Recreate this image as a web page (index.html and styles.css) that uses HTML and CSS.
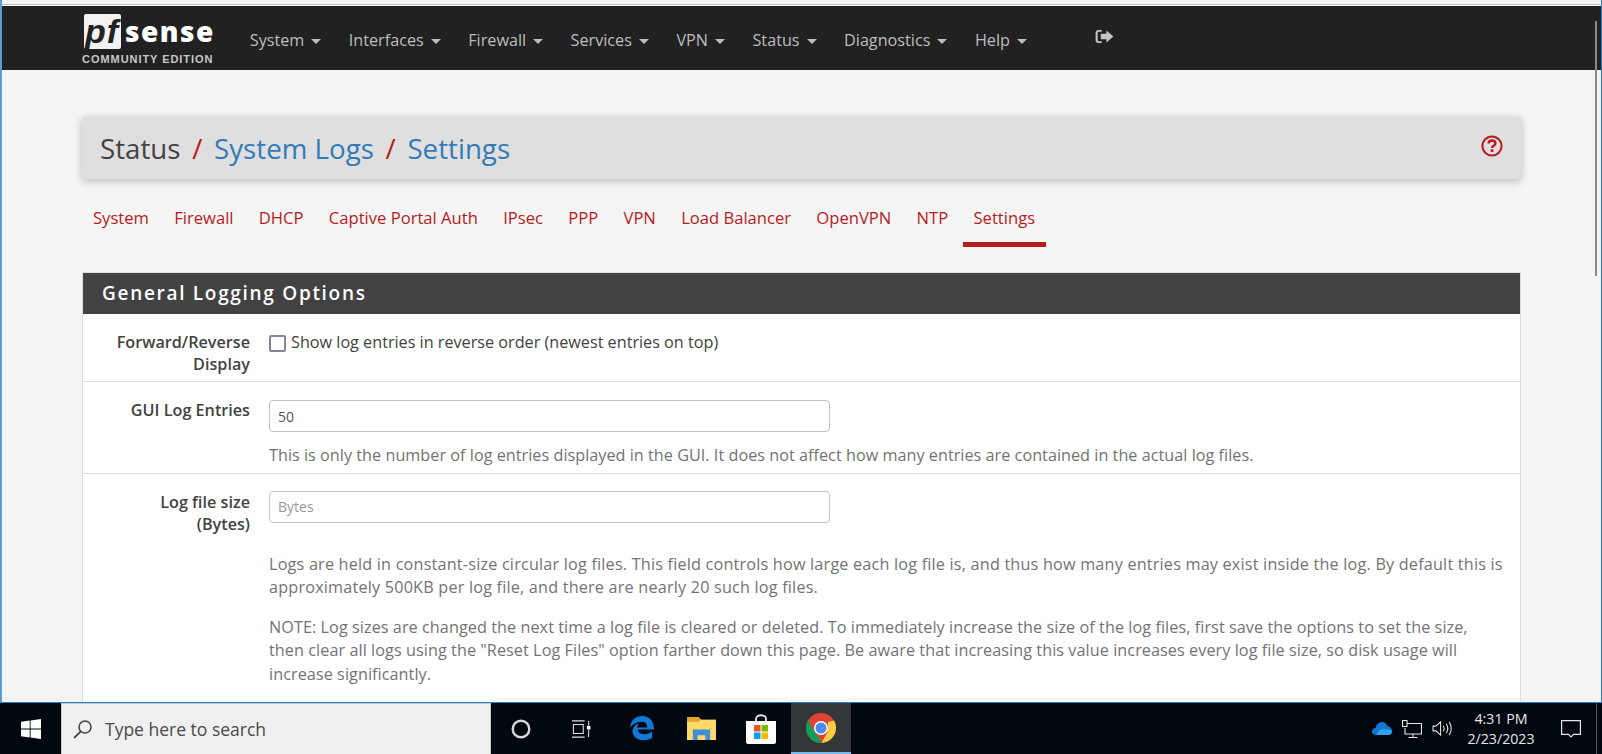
FILE: index.html
```html
<!DOCTYPE html>
<html lang="en">
<head>
  <meta charset="UTF-8">
  <title>Status: System Logs: Settings</title>
  <link rel="stylesheet" href="styles.css">
</head>
<body>
  <div class="browser">
    <div class="titlestrip"></div>
    <nav class="navbar">
      <a class="brand">
        <span class="brand-top">
          <span class="brand-pf">pf</span><span class="brand-sense">sense</span>
        </span>
        <span class="brand-sub">COMMUNITY EDITION</span>
      </a>
      <ul class="menu">
        <li>System<b class="caret"></b></li>
        <li>Interfaces<b class="caret"></b></li>
        <li>Firewall<b class="caret"></b></li>
        <li>Services<b class="caret"></b></li>
        <li>VPN<b class="caret"></b></li>
        <li>Status<b class="caret"></b></li>
        <li>Diagnostics<b class="caret"></b></li>
        <li>Help<b class="caret"></b></li>
      </ul>
      <svg class="logout" viewBox="0 0 20 16" width="19" height="15">
        <path fill="#c4c4c4" d="M7 1H3.500C1.700 1 .5 2.200 .5 4v8c0 1.800 1.200 3 3 3H7v-2H4c-.8 0-1.300-.5-1.300-1.200V4.200C2.700 3.500 3.200 3 4 3h3z"/>
        <path fill="#c4c4c4" d="M12 1.500 19.500 8 12 14.500V11H6V5h6z"/>
      </svg>
    </nav>

    <div class="container">
      <header class="crumbs">
        <h1>Status <span class="sep">/</span> <a>System Logs</a> <span class="sep">/</span> <a>Settings</a></h1>
        <svg class="help" viewBox="0 0 22 22" width="22" height="22">
          <circle cx="11" cy="11" r="9.600" fill="none" stroke="#b71c1c" stroke-width="2"/>
          <path fill="none" stroke="#b71c1c" stroke-width="2.400" d="M7.600 8.600c0-2 1.500-3.100 3.400-3.100s3.400 1 3.400 2.900c0 2.500-3.400 2.300-3.400 4.600"/>
          <rect x="9.700" y="14.300" width="2.700" height="2.600" fill="#b71c1c"/>
        </svg>
      </header>

      <ul class="tabs">
        <li>System</li>
        <li>Firewall</li>
        <li>DHCP</li>
        <li>Captive Portal Auth</li>
        <li>IPsec</li>
        <li>PPP</li>
        <li>VPN</li>
        <li>Load Balancer</li>
        <li>OpenVPN</li>
        <li>NTP</li>
        <li class="active">Settings</li>
      </ul>

      <section class="panel">
        <h2>General Logging Options</h2>
        <div class="row">
          <label class="row-label">Forward/Reverse Display</label>
          <div class="row-body">
            <label class="check"><span class="box"></span>Show log entries in reverse order (newest entries on top)</label>
          </div>
        </div>
        <div class="row">
          <label class="row-label">GUI Log Entries</label>
          <div class="row-body">
            <input class="field" type="text" value="50">
            <p class="help-text">This is only the number of log entries displayed in the GUI. It does not affect how many entries are contained in the actual log files.</p>
          </div>
        </div>
        <div class="row row-long">
          <label class="row-label">Log file size (Bytes)</label>
          <div class="row-body">
            <input class="field" type="text" placeholder="Bytes">
            <p class="help-text help-intro">Logs are held in constant-size circular log files. This field controls how large each log file is, and thus how many entries may exist inside the log. By default this is approximately 500KB per log file, and there are nearly 20 such log files.</p>
            <p class="help-text help-note">NOTE: Log sizes are changed the next time a log file is cleared or deleted. To immediately increase the size of the log files, first save the options to set the size, then clear all logs using the "Reset Log Files" option farther down this page. Be aware that increasing this value increases every log file size, so disk usage will increase significantly.</p>
          </div>
        </div>
      </section>
    </div>
    <div class="scrollthumb"></div>
  </div>

  <footer class="taskbar">
    <div class="start">
      <svg viewBox="0 0 20 20" width="20" height="20"><path fill="#fff" d="M0 2.800 8.700 1.600V9.500H0zM9.600 1.500 20 0V9.500H9.600zM0 10.500H8.700V18.400L0 17.200zM9.600 10.500H20V20L9.600 18.500z"/></svg>
    </div>
    <div class="search">
      <svg viewBox="0 0 20 20" width="20" height="20"><circle cx="12" cy="8" r="6" fill="none" stroke="#444" stroke-width="1.500"/><path stroke="#444" stroke-width="1.800" d="M7.800 12.300 1 19"/></svg>
      <span>Type here to search</span>
    </div>
    <div class="task-icons">
      <div class="task"><svg viewBox="0 0 20 20" width="20" height="20"><circle cx="10" cy="10" r="8.300" fill="none" stroke="#d8d8d8" stroke-width="2.400"/></svg></div>
      <div class="task"><svg viewBox="0 0 22 20" width="20" height="18"><g fill="none" stroke="#e0e0e0" stroke-width="1.200"><path d="M1 1h14M1 19h14M2.500 5h11v10h-11zM19.500 1v5M19.500 11v8"/></g><rect x="17.500" y="6.500" width="4" height="4" fill="#fff"/></svg></div>
      <div class="task"><svg viewBox="0 0 26 28" width="25" height="27"><path fill="#0f7ad8" d="M1 13C2 5 7 1 14 1c7 0 12 5 12 14H9c.5 5 9 7 15 2v7c-7 4-18 3-20-5-.6-2.500 0-5 1.500-7 1-1.400 3-3 5-3.500-1 1-2 2.500-2.200 4.500H19c0-4-2-6-5.500-6C8.500 7 4 9 1 13z"/></svg></div>
      <div class="task"><svg viewBox="0 0 30 26" width="29" height="25"><path fill="#e0a526" d="M0 1h12l3 3h15v21H0z"/><path fill="#ffd968" d="M0 6h12l2-2h16v21H0z"/><path fill="#3d8fd6" d="M6 14h18v11h-5v-5h-8v5H6z"/></svg></div>
      <div class="task"><svg viewBox="0 0 30 30" width="30" height="30"><path fill="none" stroke="#e8e8e8" stroke-width="1.800" d="M10 8V5c0-5 10-5 10 0v3"/><path fill="#fff" d="M0 7h30v21c0 1-1 2-2 2H2c-1 0-2-1-2-2z"/><rect x="8" y="11" width="6.500" height="6.500" fill="#f25022"/><rect x="15.500" y="11" width="6.500" height="6.500" fill="#7fba00"/><rect x="8" y="18.500" width="6.500" height="6.500" fill="#00a4ef"/><rect x="15.500" y="18.500" width="6.500" height="6.500" fill="#ffb900"/></svg></div>
      <div class="task task-active"><svg viewBox="0 0 30 30" width="30" height="30"><circle cx="15" cy="15" r="15" fill="#db4437"/><path fill="#0f9d58" d="M15 30A15 15 0 0 1 2 7.500L9 19.500 16 30z"/><path fill="#ffcd40" d="M28 7.500A15 15 0 0 1 15.500 30L21.500 19 22 9z"/><circle cx="15" cy="15" r="7" fill="#fff"/><circle cx="15" cy="15" r="5.500" fill="#4a8af4"/></svg></div>
    </div>
    <div class="tray">
      <svg viewBox="0 0 20 13" width="20" height="13"><path fill="#0f78d4" d="M4 13C1.500 13 0 11.500 0 9.500S1.700 6 3.500 6C4.500 2.500 7 0 10 0c2.500 0 4.500 1.500 5.500 4C18 4.500 20 6.500 20 9c0 2.500-1.500 4-4 4z"/><path fill="#2ea0ec" d="M4 13c4-7 9-7 16-4 0 2.500-1.500 4-4 4z"/></svg>
      <svg viewBox="0 0 20 18" width="20" height="18"><g fill="none" stroke="#e6e6e6" stroke-width="1.100"><path d="M5 3.500h14.500V14H3V8M11 14v3M6.500 17.500h9"/><rect x=".5" y=".5" width="4.500" height="6"/></g></svg>
      <svg viewBox="0 0 21 18" width="20" height="17"><g fill="none" stroke="#e6e6e6" stroke-width="1.100"><path d="M1 6.500h3L9 2v14l-5-4.500H1zM12 6c1 2 1 4 0 6M15 4c2 3 2 7 0 10M18 2c3 4 3 10 0 14"/></g></svg>
      <div class="clock"><span>4:31 PM</span><span>2/23/2023</span></div>
      <svg class="notify" viewBox="0 0 20 18" width="20" height="18"><path fill="none" stroke="#e6e6e6" stroke-width="1.200" d="M.6.600h18.800v13.800h-6.800L10 17l-2.600-2.600H.6z"/></svg>
      <div class="show-desktop"></div>
    </div>
  </footer>
</body>
</html>
```

FILE: styles.css
```css
* {
  box-sizing: border-box;
}
html, body {
  height: 100%;
  margin: 0;
  overflow: hidden;
}
body {
  display: flex;
  flex-direction: column;
  font-family: "Open Sans", sans-serif;
  font-size: 16px;
  color: #424242;
  background: #01080f;
}
.browser {
  position: relative;
  flex: 1;
  min-height: 0;
  overflow: hidden;
  background: #f5f5f5;
  border-left: 2px solid #5b9bd5;
  border-right: 1px solid #2a7dc9;
  border-bottom: 1px solid #2a7dc9;
}
.titlestrip {
  height: 5px;
  margin-bottom: 1px;
  background: #f3f3f3;
  border-bottom: 1px solid #c4c4c4;
}
.navbar {
  display: flex;
  align-items: flex-start;
  height: 64px;
  background: #212121;
}
.brand {
  display: flex;
  flex: none;
  flex-direction: column;
  width: 234px;
  padding: 8px 0 0 80px;
  color: #fff;
}
.brand-top {
  display: flex;
  align-items: center;
  height: 35px;
}
.brand-pf {
  display: block;
  flex: none;
  width: 37px;
  height: 35px;
  margin-left: 2px;
  padding-left: 1px;
  background: #f2f2f2;
  border-radius: 2px;
  color: #212121;
  font: italic 700 34px/35px "Liberation Sans", sans-serif;
  letter-spacing: 1px;
}
.brand-sense {
  margin-left: 4px;
  font: 800 28px/35px "Open Sans", sans-serif;
  letter-spacing: 1.500px;
}
.brand-sub {
  margin-top: 4px;
  font: 700 11px/12px "Liberation Sans", sans-serif;
  letter-spacing: .95px;
  color: #c8c8c8;
  white-space: nowrap;
}
.menu {
  display: flex;
  list-style: none;
  margin: 0;
  padding: 0;
}
.menu li {
  padding: 0 13.750px;
  font-size: 16.200px;
  line-height: 68px;
  color: #bdbdbd;
}
.caret {
  display: inline-block;
  margin-left: 7px;
  vertical-align: middle;
  border-top: 5px solid #bdbdbd;
  border-left: 5px solid transparent;
  border-right: 5px solid transparent;
}
.logout {
  margin: 23px 0 0 54px;
}
.container {
  width: 1439px;
  margin-left: 80px;
}
.crumbs {
  display: flex;
  align-items: center;
  justify-content: space-between;
  height: 62px;
  margin-top: 47px;
  padding: 0 18px;
  background: #dfdfdf;
  border-radius: 3px;
  box-shadow: 0 2px 8px rgba(0, 0, 0, .25);
}
.crumbs h1 {
  margin: 0;
  font-size: 27.700px;
  font-weight: 400;
  color: #424242;
}
.crumbs a {
  color: #337ab7;
}
.sep {
  padding: 0 4.500px;
  color: #b71c1c;
}
.help {
  margin-top: -4px;
}
.tabs {
  display: flex;
  list-style: none;
  margin: 19px 0 0;
  padding: 0;
  height: 49px;
}
.tabs li {
  padding: 0 11px;
  margin-right: 3.300px;
  font-size: 16.600px;
  line-height: 40px;
  color: #b71c1c;
}
.tabs .active {
  border-bottom: 5px solid #b71c1c;
}
.panel {
  margin-top: 25px;
  background: #fff;
  border: 1px solid #ddd;
}
.panel h2 {
  margin: 0;
  height: 41px;
  padding-left: 19px;
  background: #424242;
  color: #fff;
  font-size: 19px;
  font-weight: 600;
  line-height: 41px;
  letter-spacing: 1.700px;
}
.row {
  display: flex;
  padding: 17px 0 6px;
  border-bottom: 1px solid #e0e0e0;
}
.row-label {
  flex: none;
  width: 167px;
  padding-left: 25px;
  text-align: right;
  font-size: 16.200px;
  font-weight: 600;
  line-height: 22px;
}
.row-body {
  flex: 1;
  padding: 0 15px 0 19px;
}
.check {
  display: flex;
  align-items: center;
  height: 22px;
  font-size: 16.200px;
}
.box {
  width: 17px;
  height: 17px;
  margin: 2px 5px 0 0;
  background: #fff;
  border: 2px solid #85859a;
  border-radius: 2px;
}
.field {
  display: block;
  width: 561px;
  height: 32px;
  margin-top: 1px;
  padding: 0 8px;
  background: #fff;
  border: 1px solid #c2c2c2;
  border-radius: 4px;
  font-family: inherit;
  font-size: 14px;
  color: #555;
}
.row-long .field {
  margin-top: 0;
}
.field::placeholder {
  color: #999;
}
.help-text {
  margin: 12px 0 -1px;
  font-size: 16.200px;
  line-height: 23.500px;
  letter-spacing: .03px;
  color: #737373;
}
.help-intro {
  margin: 30px 0 0;
  letter-spacing: .2px;
}
.help-note {
  margin: 16px 0 24px;
  letter-spacing: .07px;
}
.scrollthumb {
  position: absolute;
  top: 21px;
  right: 4px;
  width: 2px;
  height: 255px;
  background: #8a8a8a;
}
.taskbar {
  display: flex;
  flex: none;
  align-items: stretch;
  height: 51px;
  color: #e6e6e6;
}
.start {
  display: flex;
  align-items: center;
  justify-content: center;
  width: 61px;
}
.search {
  display: flex;
  align-items: center;
  width: 430px;
  padding-left: 11px;
  background: #f0f0f0;
  border: 1px solid #c8c8c8;
  border-bottom: none;
  font-size: 17.500px;
  color: #4a4a4a;
}
.search span {
  margin-left: 12px;
}
.task-icons {
  display: flex;
}
.task {
  display: flex;
  align-items: center;
  justify-content: center;
  width: 60px;
}
.task-active {
  background: #333739;
  border-bottom: 2px solid #76b9ed;
}
.tray {
  display: flex;
  align-items: center;
  flex: 1;
  justify-content: flex-end;
  gap: 10px;
}
.clock {
  display: flex;
  flex-direction: column;
  align-items: center;
  width: 74px;
  margin: 0 13px 0 2px;
  font-size: 14.200px;
  line-height: 20px;
}
.show-desktop {
  align-self: stretch;
  width: 6px;
  margin-left: 5px;
  border-left: 1px solid #555;
}
```
